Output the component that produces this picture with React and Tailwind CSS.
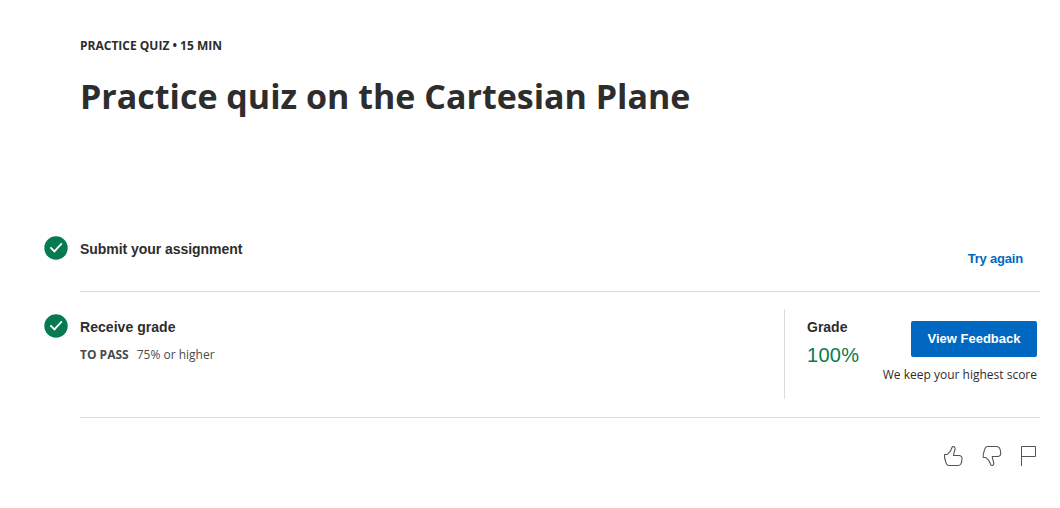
function CheckBadge() {
  return (
    <svg className="h-6 w-6 shrink-0" viewBox="0 0 24 24" fill="none" aria-hidden="true">
      <circle cx="12" cy="12" r="11.7" fill="#087a50" />
      <path d="M6.4 11.4 10.4 15.4 17.8 7.4" stroke="#fff" strokeWidth="1.8" />
    </svg>
  );
}

function ThumbUp() {
  return (
    <svg className="h-6 w-6" viewBox="0 0 24 24" fill="none" stroke="#50545a" strokeWidth="1.1" strokeLinejoin="round" aria-label="Like">
      <path d="M3.5 10.5H6.2C7.2 9.4 8.9 8.2 9.6 6.7L11.1 3.3C11.8 2 14.1 2.4 14.1 4.6C14 6.7 12.6 8.8 12.5 11.5H17.8C20 11.5 21.2 12.8 21 14.7C20.9 18 19.7 21.5 17 21.5H8C5.7 21.5 4.9 19 4.4 16.8C3.7 14.8 3.3 12.6 3.5 10.5Z" />
    </svg>
  );
}

function ThumbDown() {
  return (
    <svg className="h-6 w-6" viewBox="0 0 24 24" fill="none" stroke="#50545a" strokeWidth="1.1" strokeLinejoin="round" aria-label="Dislike">
      <path transform="translate(.7 0)" d="M3.5 13.5H6.2C7.2 14.6 8.9 15.8 9.6 17.3L11.1 20.7C11.8 22 14.1 21.6 14.1 19.4C14 17.3 12.6 15.2 12.5 12.5H17.8C20 12.5 21.2 11.2 21 9.3C20.9 6 19.7 2.5 17 2.5H8C5.7 2.5 4.9 5 4.4 7.2C3.7 9.2 3.3 11.4 3.5 13.5Z" />
    </svg>
  );
}

function Flag() {
  return (
    <svg className="h-6 w-6" viewBox="0 0 24 24" fill="none" stroke="#50545a" strokeWidth="1" aria-label="Flag">
      <path d="M4.5 22V2.5H18.5V12.5H4.5" />
    </svg>
  );
}

export default function App() {
  return (
    <main className="h-[508px] w-[1060px] overflow-hidden bg-white pr-5 pl-11 font-['Open_Sans',sans-serif] text-[#2d2d2d]">
      <header className="h-[219px] pt-[37px] pl-9 whitespace-nowrap">
        <p className="text-xs leading-[18px] font-bold">PRACTICE QUIZ • 15 MIN</p>
        <h1 className="mt-[17px] text-[34px] leading-[48px] font-bold">Practice quiz on the Cartesian Plane</h1>
      </header>

      <section className="flex h-[73px] gap-3 pt-[17px]">
        <CheckBadge />
        <div className="flex grow justify-between border-b border-[#dcdcdc] pr-[17px] font-['Liberation_Sans',sans-serif] font-bold">
          <h2 className="pt-1 text-sm leading-[18px] tracking-[-0.05px]">Submit your assignment</h2>
          <a href="#" className="pt-3.5 text-[13px] leading-[18px] tracking-[-0.2px] text-[#0068c0]">Try again</a>
        </div>
      </section>

      <section className="flex h-[126px] gap-3 pt-[17px]">
        <div className="pt-[5px]">
          <CheckBadge />
        </div>
        <div className="flex grow justify-between border-b border-[#dcdcdc] pr-[3px]">
          <div className="pt-[9px]">
            <h2 className="font-['Liberation_Sans',sans-serif] text-sm leading-[18px] font-bold tracking-[0.04px]">Receive grade</h2>
            <p className="mt-[10px] text-xs leading-[18px] text-[#4a4a4a]">
              <b className="mr-2">TO PASS</b>75% or higher
            </p>
          </div>
          <div className="flex h-[90px] w-[253px] justify-between border-l border-[#dcdcdc] pl-[22px] whitespace-nowrap">
            <div className="w-[60px] pt-[9px] font-['Liberation_Sans',sans-serif]">
              <h3 className="text-sm leading-[18px] font-bold">Grade</h3>
              <p className="mt-[7px] text-xl leading-6 tracking-[0.3px] text-[#087a50]">100%</p>
            </div>
            <div className="flex flex-col items-end pt-3">
              <button className="h-9 w-[126px] rounded-[2px] bg-[#0068c0] font-['Liberation_Sans',sans-serif] text-[13px] font-bold text-white">View Feedback</button>
              <p className="mt-[9px] text-xs leading-[18px]">We keep your highest score</p>
            </div>
          </div>
        </div>
      </section>

      <footer className="-mr-px flex justify-end gap-[14px] pt-[26px]">
        <ThumbUp />
        <ThumbDown />
        <Flag />
      </footer>
    </main>
  );
}
